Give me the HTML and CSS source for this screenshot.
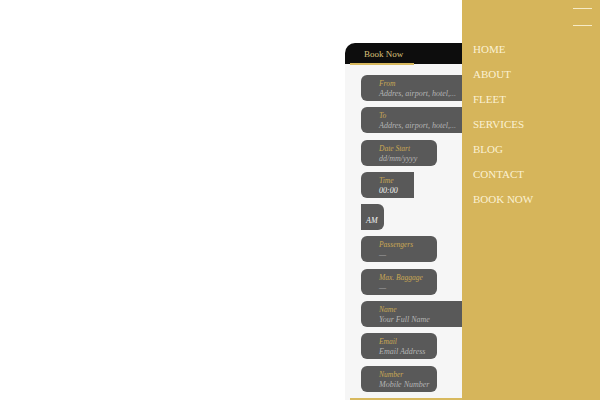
FILE: index.html
```html
<!DOCTYPE html>
<html>
<head>
<meta charset="utf-8">
<link rel="stylesheet" href="styles.css">
</head>
<body>
<main class="page">
  <section class="booking">
    <div class="tab-head"><span class="tab-title">Book Now</span><span class="tab-line"></span></div>
    <form class="fields">
      <div class="field wide"><span class="lbl">From</span><span class="val">Addres, airport, hotel,...</span></div>
      <div class="field wide"><span class="lbl">To</span><span class="val">Addres, airport, hotel,...</span></div>
      <div class="field mid"><span class="lbl">Date Start</span><span class="val">dd/mm/yyyy</span></div>
      <div class="field time"><span class="lbl">Time</span><span class="val light">00:00</span></div>
      <div class="field ampm"><span class="val light">AM</span></div>
      <div class="field mid"><span class="lbl">Passengers</span><span class="val">—</span></div>
      <div class="field mid"><span class="lbl">Max. Baggage</span><span class="val">—</span></div>
      <div class="field wide"><span class="lbl">Name</span><span class="val">Your Full Name</span></div>
      <div class="field mid"><span class="lbl">Email</span><span class="val">Email Address</span></div>
      <div class="field mid"><span class="lbl">Number</span><span class="val">Mobile Number</span></div>
      <div class="submit"></div>
    </form>
  </section>
</main>
<nav class="menu">
  <div class="burger"><span class="bar"></span><span class="bar"></span></div>
  <ul class="menu-list">
    <li>HOME</li>
    <li>ABOUT</li>
    <li>FLEET</li>
    <li>SERVICES</li>
    <li>BLOG</li>
    <li>CONTACT</li>
    <li>BOOK NOW</li>
  </ul>
</nav>
</body>
</html>
```
FILE: styles.css
```css
html, body {
  margin: 0;
  padding: 0;
  background: #ffffff;
  font-family: "Liberation Serif", "DejaVu Serif", serif;
  overflow: hidden;
  height: 400px;
}
.page {
  display: flex;
  padding: 43px 0 0 345px;
}
.booking {
  width: 220px;
  display: flex;
  flex-direction: column;
}
.tab-head {
  position: relative;
  height: 21px;
  background: #0d0d0d;
  border-top-left-radius: 10px;
  display: flex;
  align-items: center;
  padding-left: 19px;
}
.tab-title {
  color: #d9c17a;
  font-size: 9px;
}
.tab-line {
  position: absolute;
  left: 5px;
  bottom: -1px;
  width: 64px;
  height: 2px;
  background: #d8b95e;
}
.fields {
  margin: 0;
  background: #f6f6f6;
  padding: 11px 0 0 16px;
  display: flex;
  flex-direction: column;
  gap: 6.3px;
}
.field {
  flex-shrink: 0;
  background: #595959;
  border-radius: 6px;
  height: 26px;
  box-sizing: border-box;
  padding: 4px 0 0 18px;
  display: flex;
  flex-direction: column;
  font-style: italic;
}
.wide { width: 130px; }
.mid { width: 76px; }
.time { width: 53px; border-radius: 6px 0 0 6px; }
.ampm {
  width: 23px;
  border-radius: 0 6px 6px 0;
  padding: 0 0 4px 5px;
  justify-content: flex-end;
}
.lbl {
  color: #c9a854;
  font-size: 7.5px;
  line-height: 9px;
}
.val {
  color: #b4b4b4;
  font-size: 8px;
  line-height: 11px;
  white-space: nowrap;
}
.val.light {
  color: #f2f2f2;
}
.submit {
  flex-shrink: 0;
  height: 20px;
  width: 200px;
  border-top: 2px solid #d8b95e;
  background: #f6f6f6;
  margin-left: -11px;
}
.menu {
  position: absolute;
  top: 0;
  right: 0;
  width: 138px;
  height: 400px;
  background: #d6b55b;
}
.burger {
  display: flex;
  flex-direction: column;
  align-items: flex-end;
  gap: 16px;
  padding: 8px 8px 0 0;
}
.bar {
  display: block;
  width: 19px;
  height: 1px;
  background: #f6ebc6;
}
.menu-list {
  list-style: none;
  margin: 11px 0 0 0;
  padding: 0 0 0 11px;
}
.menu-list li {
  color: #fbf1d3;
  font-size: 11px;
  line-height: 25px;
}
```
